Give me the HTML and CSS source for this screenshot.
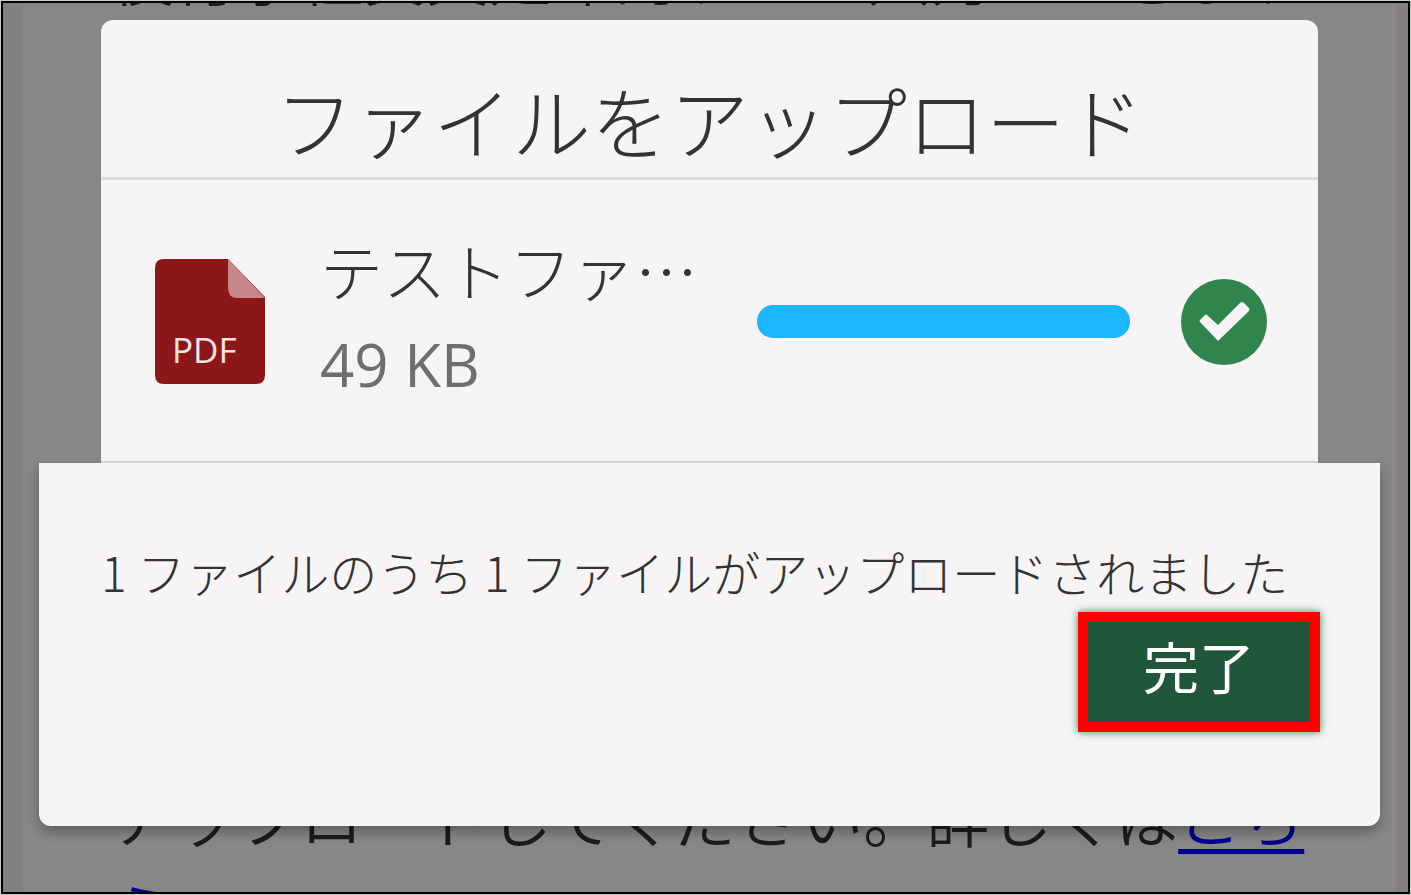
FILE: index.html
```html
<!DOCTYPE html>
<html lang="ja">
<head>
<meta charset="utf-8">
<meta name="viewport" content="width=device-width, initial-scale=1">
<title>ファイルをアップロード</title>
<link rel="stylesheet" href="styles.css">
</head>
<body>
<div class="frame">
  <main class="page">
    <p class="page-text">後付小経費又延命的すると入力ができます</p>
    <p class="page-text page-text-end">アップロードしてください。詳しくは<a href="#">こち<br>ら</a></p>
  </main>
  <div class="dialog" role="dialog" aria-labelledby="dialog-title">
    <header class="dialog-header">
      <h1 class="title" id="dialog-title">ファイルをアップロード</h1>
    </header>
    <section class="file">
      <svg class="file-icon" viewBox="0 0 110 125" role="img" aria-label="PDF">
        <path fill="#8b1718" d="M9 0H73L110 38V116Q110 125 101 125H9Q0 125 0 116V9Q0 0 9 0Z"/>
        <path fill="#c78789" d="M73 0L110 39H83Q73 39 73 29Z"/>
        <text class="file-icon-label" x="17" y="104">PDF</text>
      </svg>
      <div class="file-info">
        <div class="file-name">テストファ…</div>
        <div class="file-size">49 KB</div>
      </div>
      <div class="progress" role="progressbar" aria-label="アップロード" aria-valuenow="100" aria-valuemin="0" aria-valuemax="100"></div>
      <svg class="done-icon" viewBox="0 0 88 88" aria-hidden="true">
        <circle cx="44" cy="45" r="43" fill="#2f854c"/>
        <path d="M20 45Q19 44 20 43L25 38Q26 37 27 38L38 48L60 26Q62 24 64 26L69 31Q70 33 69 34L38 64Z" fill="#f6f4f5"/>
      </svg>
    </section>
    <footer class="dialog-footer">
      <p class="status">1 ファイルのうち 1 ファイルがアップロードされました</p>
      <button class="finish" type="button">完了</button>
    </footer>
  </div>
</div>
</body>
</html>
```
FILE: styles.css
```css
* {
  box-sizing: border-box;
}

body {
  margin: 0;
  padding: 1px;
  height: 100vh;
  background: #c6cec6;
  color: #333;
  font-family: "Noto Sans CJK JP", sans-serif;
  font-weight: 300;
}

h1,
p {
  margin: 0;
  font-weight: 300;
}

.frame {
  display: grid;
  grid-template: minmax(0, 1fr) / minmax(0, 1fr);
  height: 100%;
  overflow: hidden;
  border: 2px solid #000;
}

.page,
.dialog {
  grid-area: 1 / 1;
}

.page {
  display: flex;
  flex-direction: column;
  justify-content: space-between;
  min-height: 0;
  overflow: hidden;
  padding: 0 88px;
  border: solid #847f80;
  border-width: 0 12px 0 20px;
  background: #878787;
}

.page-text {
  margin-top: -77px;
  color: #1c1c1c;
  font-size: 63px;
  font-weight: 350;
  line-height: 94px;
  white-space: nowrap;
}

.page-text-end {
  margin: 0 0 -64px;
}

.page-text a {
  color: #00008c;
  text-decoration-thickness: 5px;
  text-underline-offset: 7px;
}

.dialog {
  align-self: start;
  margin: 17px 28px 0 36px;
  min-width: 0;
}

.dialog-header,
.file {
  margin: 0 62px;
  background: #f6f4f5;
}

.dialog-header {
  padding: 46px 0 3px;
  border-bottom: 3px solid #dddbdc;
  border-radius: 12px 12px 0 0;
}

.title {
  font-size: 79px;
  line-height: 108px;
  text-align: center;
}

.file {
  display: flex;
  align-items: center;
  height: 283px;
  padding: 1px 50px 0 54px;
  border-bottom: 2px solid #dddbdc;
}

.file-icon {
  flex: none;
  width: 110px;
  height: 125px;
}

.file-icon-label {
  fill: #f6e4e4;
  font-family: "Open Sans", sans-serif;
  font-size: 35px;
  font-weight: 400;
}

.file-info {
  flex: none;
  width: 382px;
  margin: 0 55px;
  padding-bottom: 8px;
}

.file-name {
  font-size: 63px;
  line-height: 94px;
}

.file-size {
  color: #6e6e6e;
  font-family: "Open Sans", sans-serif;
  font-size: 60px;
  font-weight: 400;
  line-height: 96px;
}

.progress {
  flex: 1;
  height: 33px;
  margin-right: 50px;
  border-radius: 16px;
  background: #1cb7ff;
}

.done-icon {
  flex: none;
  width: 88px;
  height: 88px;
}

.dialog-footer {
  display: flex;
  flex-direction: column;
  padding: 72px 60px 94px 62px;
  border-radius: 0 0 12px 12px;
  background: #f6f4f5;
  box-shadow: 0 6px 12px rgba(0, 0, 0, 0.3);
}

.status {
  padding-bottom: 5px;
  font-size: 48px;
  line-height: 72px;
  white-space: nowrap;
}

.finish {
  align-self: flex-end;
  width: 242px;
  height: 120px;
  padding: 0 0 14px;
  border: 10px solid #f00;
  background: #20573b;
  box-shadow: 0 0 8px #2f854c;
  color: #fff;
  font: 400 56px/80px "Noto Sans CJK JP", sans-serif;
}
```
